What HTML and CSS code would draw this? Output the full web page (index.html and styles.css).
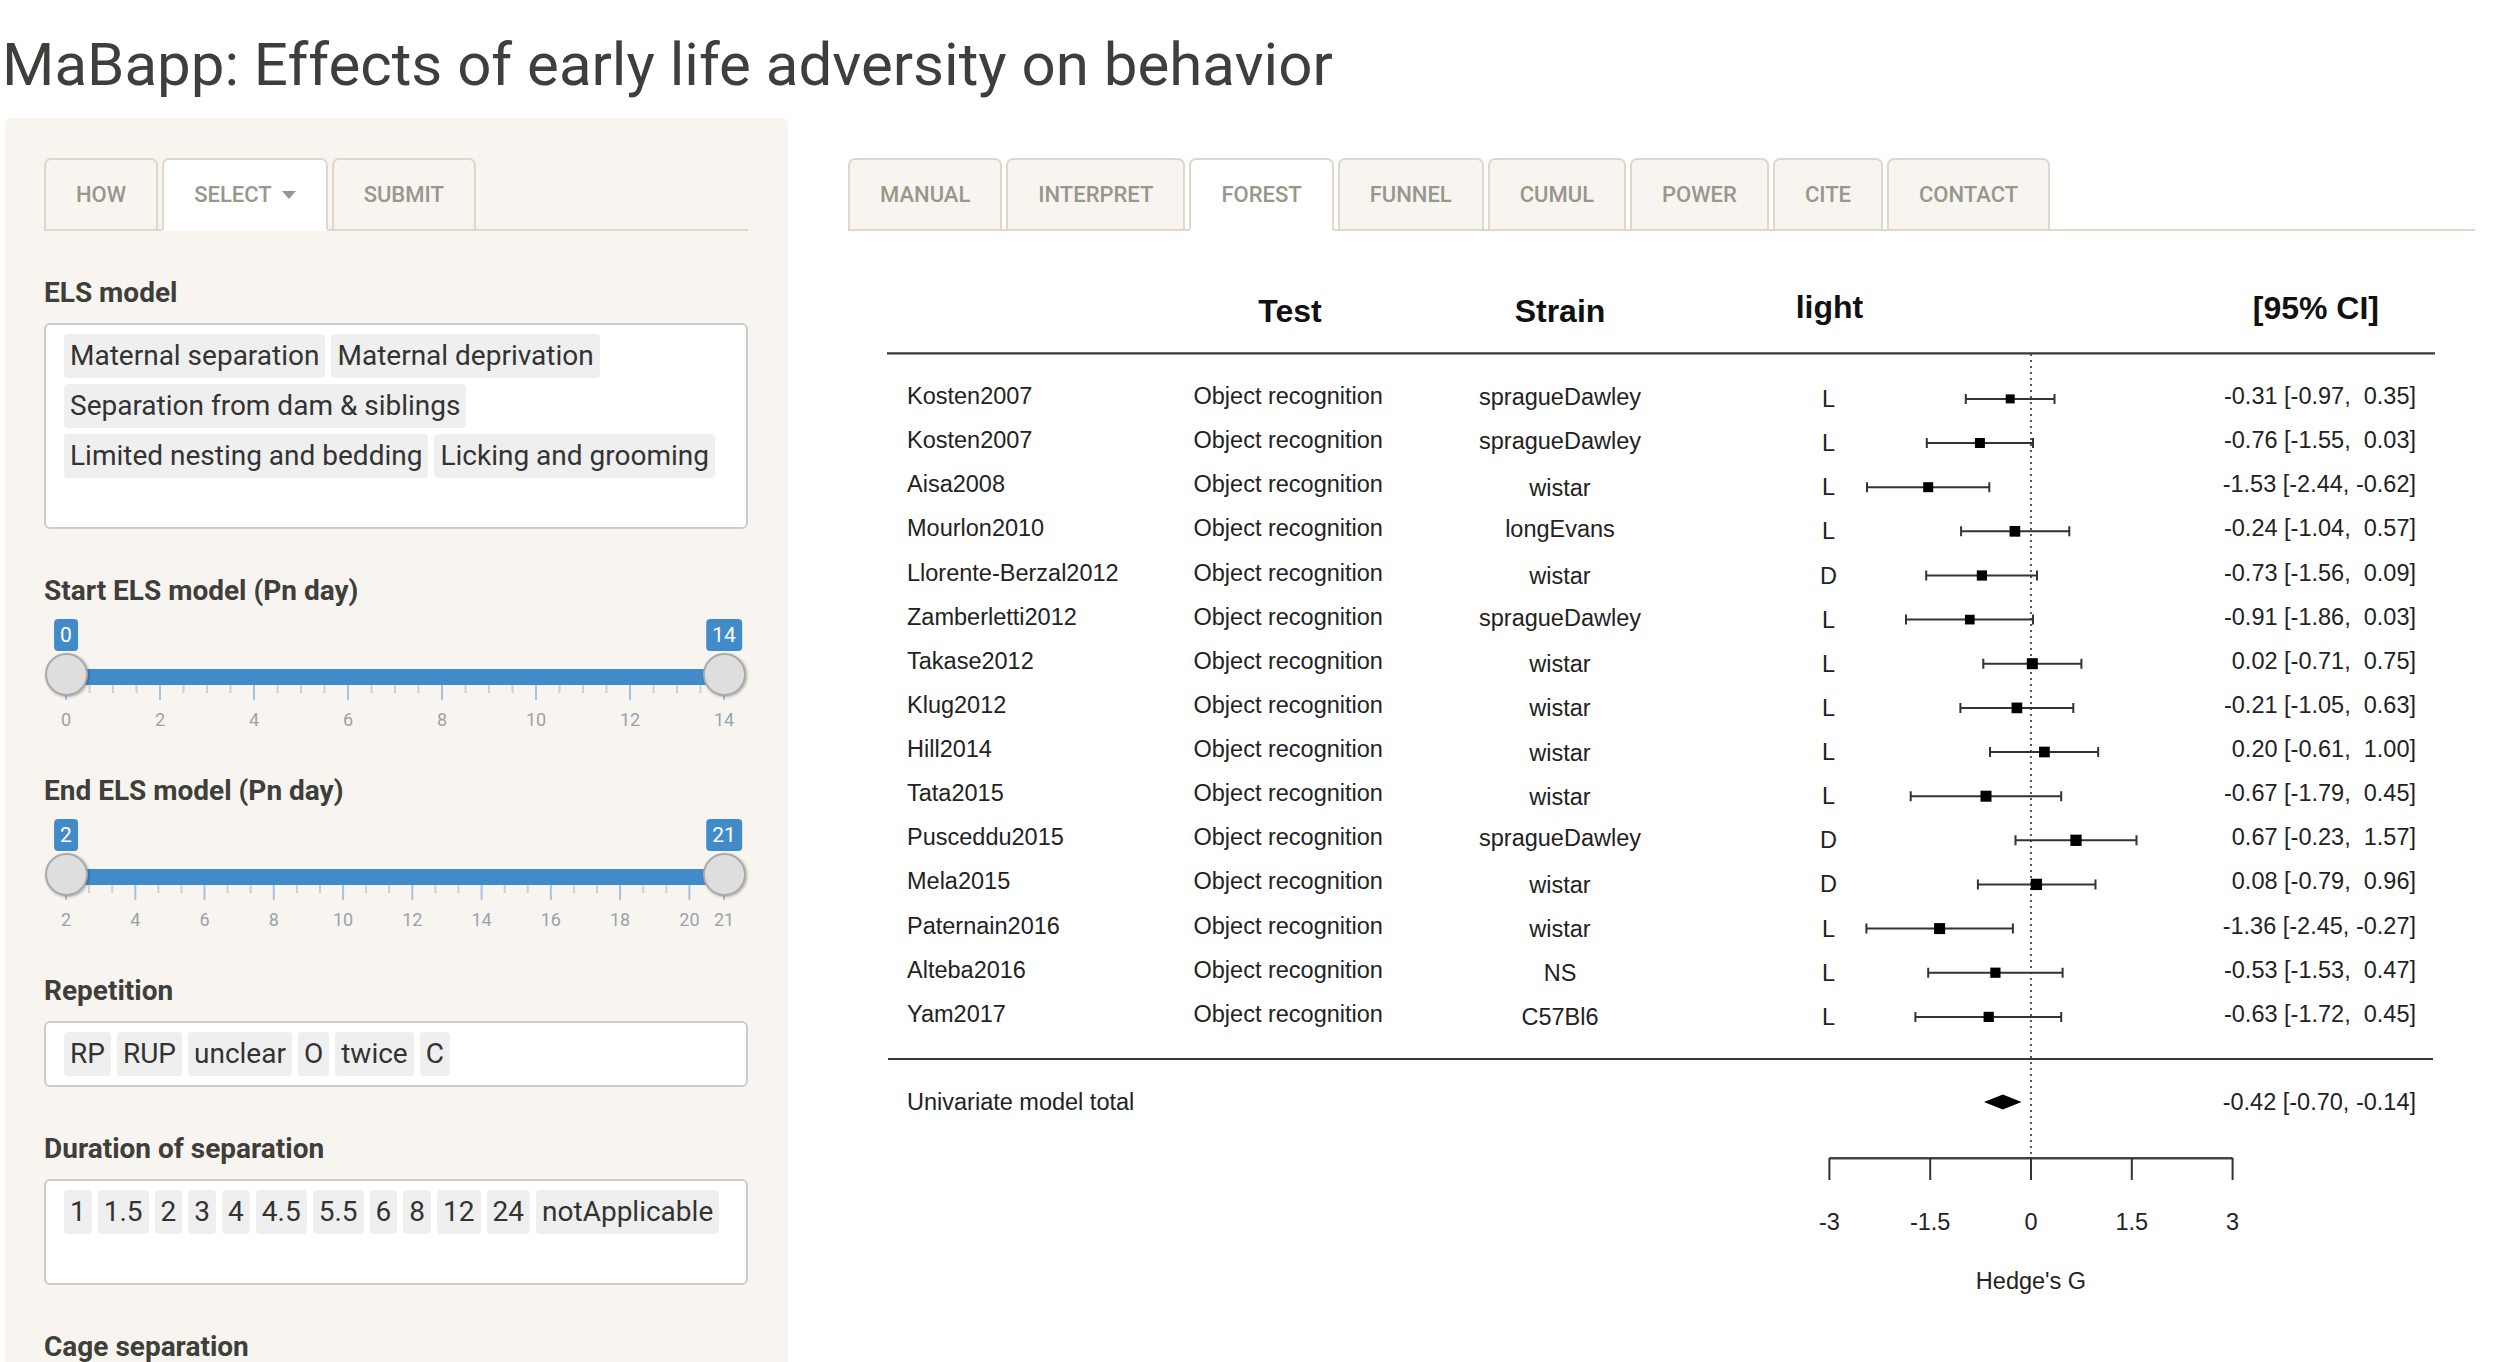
FILE: index.html
```html
<!DOCTYPE html>
<html lang="en">
<head>
<meta charset="utf-8">
<title>MaBapp</title>
<link rel="stylesheet" href="styles.css">
</head>
<body>
<h1 class="title">MaBapp: Effects of early life adversity on behavior</h1>
<div class="layout">
  <aside class="sidebar">
    <ul class="tabs">
      <li class="tab">HOW</li>
      <li class="tab active">SELECT<span class="caret"></span></li>
      <li class="tab">SUBMIT</li>
    </ul>

    <div class="field">
      <div class="label">ELS model</div>
      <div class="select">
        <span class="chip">Maternal separation</span>
        <span class="chip">Maternal deprivation</span>
        <span class="chip">Separation from dam &amp; siblings</span>
        <span class="chip">Limited nesting and bedding</span>
        <span class="chip">Licking and grooming</span>
        <span class="sel-input"></span>
      </div>
    </div>

    <div class="field slider-field">
      <div class="label">Start ELS model (Pn day)</div>
      <div class="slider">
        <div class="irs-bar"></div>
        <svg class="irs-grid" width="702" height="44" viewBox="0 0 702 44">
          <path class="pol-small" d="M45.5 0v8M69 0v8M92.5 0v8M139.5 0v8M163 0v8M186.5 0v8M233.5 0v8M257 0v8M280.5 0v8M327.5 0v8M351 0v8M374.5 0v8M421.5 0v8M445 0v8M468.5 0v8M515.5 0v8M539 0v8M562.5 0v8M609.5 0v8M633 0v8M656.5 0v8"/>
          <path class="pol-big" d="M22 0v15M116 0v15M210 0v15M304 0v15M398 0v15M492 0v15M586 0v15M680 0v15"/>
          <text x="22" y="40.5">0</text>
          <text x="116" y="40.5">2</text>
          <text x="210" y="40.5">4</text>
          <text x="304" y="40.5">6</text>
          <text x="398" y="40.5">8</text>
          <text x="492" y="40.5">10</text>
          <text x="586" y="40.5">12</text>
          <text x="680" y="40.5">14</text>
        </svg>
        <span class="irs-handle h-from"></span>
        <span class="irs-handle h-to"></span>
        <span class="irs-badge h-from">0</span>
        <span class="irs-badge h-to">14</span>
      </div>
    </div>

    <div class="field slider-field">
      <div class="label">End ELS model (Pn day)</div>
      <div class="slider">
        <div class="irs-bar"></div>
        <svg class="irs-grid" width="702" height="44" viewBox="0 0 702 44">
          <path class="pol-small" d="M45.1 0v8M68.2 0v8M114.4 0v8M137.4 0v8M183.6 0v8M206.7 0v8M252.9 0v8M276 0v8M322.1 0v8M345.2 0v8M391.4 0v8M414.5 0v8M460.7 0v8M483.8 0v8M529.9 0v8M553 0v8M599.2 0v8M622.3 0v8"/>
          <path class="pol-big" d="M22 0v15M91.3 0v15M160.5 0v15M229.8 0v15M299.1 0v15M368.3 0v15M437.6 0v15M506.8 0v15M576.1 0v15M645.4 0v15M680 0v15"/>
          <text x="22" y="40.5">2</text>
          <text x="91.3" y="40.5">4</text>
          <text x="160.5" y="40.5">6</text>
          <text x="229.8" y="40.5">8</text>
          <text x="299.1" y="40.5">10</text>
          <text x="368.3" y="40.5">12</text>
          <text x="437.6" y="40.5">14</text>
          <text x="506.8" y="40.5">16</text>
          <text x="576.1" y="40.5">18</text>
          <text x="645.4" y="40.5">20</text>
          <text x="680" y="40.5">21</text>
        </svg>
        <span class="irs-handle h-from"></span>
        <span class="irs-handle h-to"></span>
        <span class="irs-badge h-from">2</span>
        <span class="irs-badge h-to">21</span>
      </div>
    </div>

    <div class="field">
      <div class="label">Repetition</div>
      <div class="select">
        <span class="chip">RP</span>
        <span class="chip">RUP</span>
        <span class="chip">unclear</span>
        <span class="chip">O</span>
        <span class="chip">twice</span>
        <span class="chip">C</span>
        <span class="sel-input"></span>
      </div>
    </div>

    <div class="field">
      <div class="label">Duration of separation</div>
      <div class="select">
        <span class="chip">1</span>
        <span class="chip">1.5</span>
        <span class="chip">2</span>
        <span class="chip">3</span>
        <span class="chip">4</span>
        <span class="chip">4.5</span>
        <span class="chip">5.5</span>
        <span class="chip">6</span>
        <span class="chip">8</span>
        <span class="chip">12</span>
        <span class="chip">24</span>
        <span class="chip">notApplicable</span>
        <span class="sel-input"></span>
      </div>
    </div>

    <div class="field">
      <div class="label">Cage separation</div>
      <div class="select select-empty">
        <span class="sel-input"></span>
      </div>
    </div>
  </aside>

  <main class="main">
    <ul class="tabs">
      <li class="tab">MANUAL</li>
      <li class="tab">INTERPRET</li>
      <li class="tab active">FOREST</li>
      <li class="tab">FUNNEL</li>
      <li class="tab">CUMUL</li>
      <li class="tab">POWER</li>
      <li class="tab">CITE</li>
      <li class="tab">CONTACT</li>
    </ul>

    <svg class="forest" width="1580" height="1112" viewBox="0 0 1580 1112">
      <g class="hdr">
        <text x="410" y="72" text-anchor="middle">Test</text>
        <text x="680" y="72" text-anchor="middle">Strain</text>
        <text x="915.7" y="68">light</text>
        <text x="1499" y="69" text-anchor="end">[95% CI]</text>
      </g>
      <path class="rule" d="M7 103.3H1555"/>
      <path class="rule" d="M8 809H1553"/>
      <path class="zero" d="M1151 104V908"/>

      <g class="names">
        <text x="27" y="153.9">Kosten2007</text>
        <text x="27" y="198">Kosten2007</text>
        <text x="27" y="242.2">Aisa2008</text>
        <text x="27" y="286.3">Mourlon2010</text>
        <text x="27" y="330.5">Llorente-Berzal2012</text>
        <text x="27" y="374.6">Zamberletti2012</text>
        <text x="27" y="418.7">Takase2012</text>
        <text x="27" y="462.9">Klug2012</text>
        <text x="27" y="507">Hill2014</text>
        <text x="27" y="551.2">Tata2015</text>
        <text x="27" y="595.3">Pusceddu2015</text>
        <text x="27" y="639.4">Mela2015</text>
        <text x="27" y="683.6">Paternain2016</text>
        <text x="27" y="727.7">Alteba2016</text>
        <text x="27" y="771.9">Yam2017</text>
        <text x="27" y="860">Univariate model total</text>
      </g>
      <g class="tests">
        <text x="313.5" y="153.9">Object recognition</text>
        <text x="313.5" y="198">Object recognition</text>
        <text x="313.5" y="242.2">Object recognition</text>
        <text x="313.5" y="286.3">Object recognition</text>
        <text x="313.5" y="330.5">Object recognition</text>
        <text x="313.5" y="374.6">Object recognition</text>
        <text x="313.5" y="418.7">Object recognition</text>
        <text x="313.5" y="462.9">Object recognition</text>
        <text x="313.5" y="507">Object recognition</text>
        <text x="313.5" y="551.2">Object recognition</text>
        <text x="313.5" y="595.3">Object recognition</text>
        <text x="313.5" y="639.4">Object recognition</text>
        <text x="313.5" y="683.6">Object recognition</text>
        <text x="313.5" y="727.7">Object recognition</text>
        <text x="313.5" y="771.9">Object recognition</text>
      </g>
      <g class="strains" text-anchor="middle">
        <text x="680" y="155">spragueDawley</text>
        <text x="680" y="199">spragueDawley</text>
        <text x="680" y="245.7">wistar</text>
        <text x="680" y="287.3">longEvans</text>
        <text x="680" y="334">wistar</text>
        <text x="680" y="375.6">spragueDawley</text>
        <text x="680" y="422.2">wistar</text>
        <text x="680" y="466.4">wistar</text>
        <text x="680" y="510.5">wistar</text>
        <text x="680" y="554.7">wistar</text>
        <text x="680" y="596.3">spragueDawley</text>
        <text x="680" y="642.9">wistar</text>
        <text x="680" y="687.1">wistar</text>
        <text x="680" y="731.2">NS</text>
        <text x="680" y="775.4">C57Bl6</text>
      </g>
      <g class="lights" text-anchor="middle">
        <text x="948.5" y="157">L</text>
        <text x="948.5" y="201">L</text>
        <text x="948.5" y="245.2">L</text>
        <text x="948.5" y="289.3">L</text>
        <text x="948.5" y="333.5">D</text>
        <text x="948.5" y="377.6">L</text>
        <text x="948.5" y="421.7">L</text>
        <text x="948.5" y="465.9">L</text>
        <text x="948.5" y="510">L</text>
        <text x="948.5" y="554.2">L</text>
        <text x="948.5" y="598.3">D</text>
        <text x="948.5" y="642.4">D</text>
        <text x="948.5" y="686.6">L</text>
        <text x="948.5" y="730.7">L</text>
        <text x="948.5" y="774.9">L</text>
      </g>
      <g class="cis" text-anchor="end">
        <text x="1536" y="153.9">-0.31 [-0.97,  0.35]</text>
        <text x="1536" y="198">-0.76 [-1.55,  0.03]</text>
        <text x="1536" y="242.2">-1.53 [-2.44, -0.62]</text>
        <text x="1536" y="286.3">-0.24 [-1.04,  0.57]</text>
        <text x="1536" y="330.5">-0.73 [-1.56,  0.09]</text>
        <text x="1536" y="374.6">-0.91 [-1.86,  0.03]</text>
        <text x="1536" y="418.7">0.02 [-0.71,  0.75]</text>
        <text x="1536" y="462.9">-0.21 [-1.05,  0.63]</text>
        <text x="1536" y="507">0.20 [-0.61,  1.00]</text>
        <text x="1536" y="551.2">-0.67 [-1.79,  0.45]</text>
        <text x="1536" y="595.3">0.67 [-0.23,  1.57]</text>
        <text x="1536" y="639.4">0.08 [-0.79,  0.96]</text>
        <text x="1536" y="683.6">-1.36 [-2.45, -0.27]</text>
        <text x="1536" y="727.7">-0.53 [-1.53,  0.47]</text>
        <text x="1536" y="771.9">-0.63 [-1.72,  0.45]</text>
        <text x="1536" y="860">-0.42 [-0.70, -0.14]</text>
      </g>

      <path class="ci" d="M1085.8 148.9H1174.5M1085.8 143.9V153.9M1174.5 143.9V153.9
        M1046.8 193H1153M1046.8 188V198M1153 188V198
        M987 237.2H1109.3M987 232.2V242.2M1109.3 232.2V242.2
        M1081.1 281.3H1189.3M1081.1 276.3V286.3M1189.3 276.3V286.3
        M1046.2 325.5H1157M1046.2 320.5V330.5M1157 320.5V330.5
        M1026 369.6H1153M1026 364.6V374.6M1153 364.6V374.6
        M1103.3 413.7H1201.4M1103.3 408.7V418.7M1201.4 408.7V418.7
        M1080.4 457.9H1193.3M1080.4 452.9V462.9M1193.3 452.9V462.9
        M1110 502H1218.2M1110 497V507M1218.2 497V507
        M1030.7 546.2H1181.2M1030.7 541.2V551.2M1181.2 541.2V551.2
        M1135.5 590.3H1256.5M1135.5 585.3V595.3M1256.5 585.3V595.3
        M1097.9 634.4H1215.5M1097.9 629.4V639.4M1215.5 629.4V639.4
        M986.4 678.6H1132.9M986.4 673.6V683.6M1132.9 673.6V683.6
        M1048.2 722.7H1182.6M1048.2 717.7V727.7M1182.6 717.7V727.7
        M1035.4 766.9H1181.2M1035.4 761.9V771.9M1181.2 761.9V771.9"/>
      <g class="pts">
        <rect x="1125.7" y="144.4" width="9" height="9"/>
        <rect x="1094.9" y="188" width="10" height="10"/>
        <rect x="1043.2" y="232.2" width="10" height="10"/>
        <rect x="1129.55" y="275.95" width="10.7" height="10.7"/>
        <rect x="1096.8" y="320.4" width="10.2" height="10.2"/>
        <rect x="1084.95" y="364.75" width="9.7" height="9.7"/>
        <rect x="1146.8" y="408.2" width="11" height="11"/>
        <rect x="1131.55" y="452.55" width="10.7" height="10.7"/>
        <rect x="1159.05" y="496.65" width="10.7" height="10.7"/>
        <rect x="1100.5" y="540.7" width="11" height="11"/>
        <rect x="1190.35" y="584.65" width="11.3" height="11.3"/>
        <rect x="1150.75" y="628.75" width="11.3" height="11.3"/>
        <rect x="1054.1" y="673.1" width="11" height="11"/>
        <rect x="1110.3" y="717.6" width="10.2" height="10.2"/>
        <rect x="1103.6" y="761.8" width="10.2" height="10.2"/>
        <polygon points="1104,852 1122.8,844.5 1141.6,852 1122.8,859.5"/>
      </g>

      <path class="axis" d="M949.4 908.3H1352.6"/>
      <path class="ticks" d="M949.4 908V930M1050.2 908V930M1151 908V930M1251.8 908V930M1352.6 908V930"/>
      <g class="axis-labels" text-anchor="middle">
        <text x="949.4" y="980">-3</text>
        <text x="1050.2" y="980">-1.5</text>
        <text x="1151" y="980">0</text>
        <text x="1251.8" y="980">1.5</text>
        <text x="1352.6" y="980">3</text>
        <text x="1151" y="1039">Hedge's G</text>
      </g>
    </svg>
  </main>
</div>
</body>
</html>
```

FILE: styles.css
```css
html {
  overflow: hidden;
}

html, body {
  margin: 0;
  padding: 0;
}

body {
  font-family: Roboto, "Liberation Sans", Arial, sans-serif;
  color: #3e3f3a;
  background: #ffffff;
}

.title {
  margin: 0;
  padding: 30px 0 0 2px;
  font-size: 60px;
  line-height: 70px;
  font-weight: 400;
  color: #3e3f3a;
}

.layout {
  display: flex;
  align-items: flex-start;
  margin-top: 18px;
}

/* ---------- sidebar ---------- */
.sidebar {
  flex: none;
  box-sizing: border-box;
  width: 783px;
  margin-left: 5px;
  padding: 40px 40px 60px 39px;
  background: #f8f5f0;
  border-radius: 6px;
}

/* ---------- tabs ---------- */
.tabs {
  display: flex;
  list-style: none;
  margin: 0;
  padding: 0;
  height: 71px;
  border-bottom: 2px solid #dfd7ca;
}

.tab {
  box-sizing: border-box;
  flex: none;
  display: flex;
  align-items: center;
  height: 73px;
  margin: 0 4px -2px 0;
  padding: 0 30px;
  background: #f8f5f0;
  border: 2px solid #dfd7ca;
  border-radius: 7px 7px 0 0;
  font-size: 22px;
  font-weight: 500;
  color: #98978b;
  white-space: nowrap;
}

.tab.active {
  background: #ffffff;
  border-bottom-color: #ffffff;
}

.caret {
  display: inline-block;
  width: 0;
  height: 0;
  margin-left: 10px;
  border-top: 8px solid #98978b;
  border-left: 7.5px solid transparent;
  border-right: 7.5px solid transparent;
}

/* ---------- form fields ---------- */
.field {
  margin-top: 46px;
}

.label {
  font-size: 28px;
  line-height: 32px;
  font-weight: 700;
  color: #3e3f3a;
  margin-bottom: 14px;
}

.slider-field .label {
  margin-bottom: 12px;
}

.select {
  box-sizing: border-box;
  display: flex;
  flex-wrap: wrap;
  align-content: flex-start;
  background: #ffffff;
  border: 2px solid #cccccc;
  border-radius: 6px;
  padding: 9px 18px 3px 18px;
}

.select-empty {
  min-height: 66px;
}

.chip {
  height: 44px;
  line-height: 44px;
  padding: 0 6px;
  margin: 0 6px 6px 0;
  background: #efefef;
  border-radius: 4px;
  font-size: 28px;
  color: #333333;
  white-space: nowrap;
}

.sel-input {
  width: 24px;
  height: 34px;
  margin-bottom: 6px;
}

/* ---------- range slider ---------- */
.slider {
  position: relative;
  width: 702px;
  height: 110px;
}

.irs-bar {
  position: absolute;
  left: 22px;
  width: 658px;
  top: 50px;
  height: 16px;
  background: #428bca;
}

.irs-grid {
  position: absolute;
  left: 0;
  top: 66px;
  overflow: visible;
}

.pol-small {
  stroke: #cfcfcf;
  stroke-width: 2;
}

.pol-big {
  stroke: #a3c3e3;
  stroke-width: 2;
}

.irs-grid text {
  font-family: Roboto, "Liberation Sans", sans-serif;
  font-size: 18px;
  fill: #9aa2ab;
  text-anchor: middle;
}

.irs-handle {
  position: absolute;
  top: 34px;
  box-sizing: border-box;
  width: 43px;
  height: 43px;
  margin-left: -21.5px;
  border-radius: 50%;
  background: #dedede;
  border: 2px solid #ababab;
  box-shadow: 1px 1px 3px rgba(0, 0, 0, 0.3);
}

.irs-badge {
  position: absolute;
  top: 0;
  height: 32px;
  line-height: 32px;
  padding: 0 6px;
  transform: translateX(-50%);
  background: #428bca;
  color: #ffffff;
  font-size: 21px;
  border-radius: 4px;
}

.h-from {
  left: 22px;
}

.h-to {
  left: 680px;
}

/* ---------- main ---------- */
.main {
  flex: 1;
  min-width: 0;
  margin-left: 60px;
  margin-right: 27px;
  padding-top: 40px;
}

.forest {
  display: block;
  margin: 19px 0 0 32px;
}

.forest text {
  font-family: "Liberation Sans", Arial, sans-serif;
  font-size: 23.5px;
  fill: #222222;
  white-space: pre;
}

.forest .hdr text {
  font-size: 32px;
  font-weight: 700;
  fill: #111111;
}

.forest .rule {
  stroke: #3a3a3a;
  stroke-width: 2.2;
  fill: none;
}

.forest .zero {
  stroke: #555555;
  stroke-width: 2;
  stroke-dasharray: 2 4;
  fill: none;
}

.forest .ci {
  stroke: #333333;
  stroke-width: 2;
  fill: none;
}

.forest .pts rect,
.forest .pts polygon {
  fill: #000000;
}

.forest .axis {
  stroke: #444444;
  stroke-width: 2.5;
  fill: none;
}

.forest .ticks {
  stroke: #333333;
  stroke-width: 2;
  fill: none;
}
```
